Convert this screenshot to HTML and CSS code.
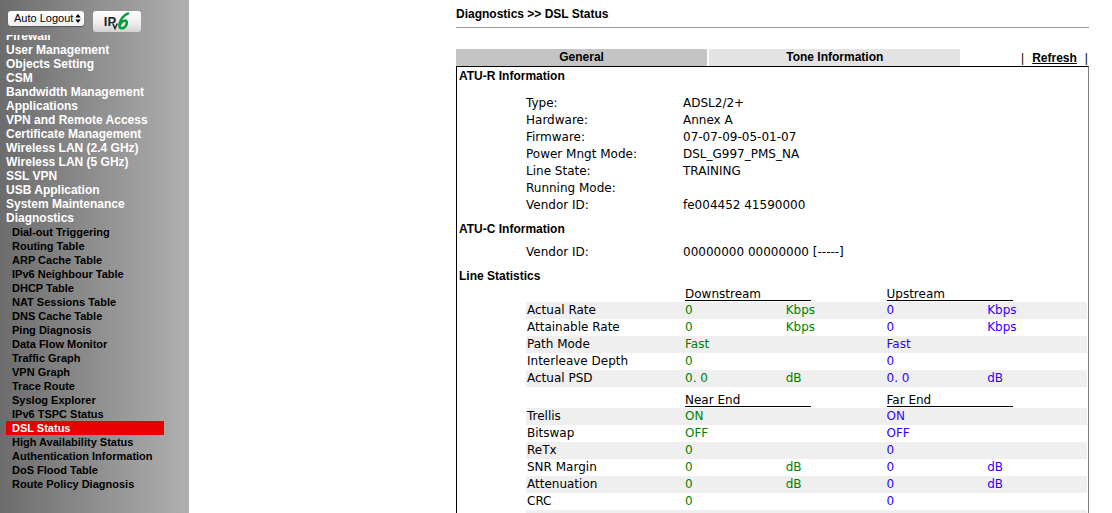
FILE: index.html
```html
<!DOCTYPE html>
<html lang="en">
<head>
<meta charset="utf-8">
<title>DSL Status</title>
<link rel="stylesheet" href="styles.css">
</head>
<body class="page">
<aside class="sidebar">
  <div class="tools">
    <div class="logout">
      <select class="logout-select" aria-label="Auto Logout"><option>Auto Logout</option></select>
      <svg class="logout-arrows" viewBox="0 0 6 10" aria-hidden="true"><path d="M3 0 6 4H0zM3 10 0 6h6z"/></svg>
    </div>
    <button class="ipv6" type="button" aria-label="IPv6">
      <span class="ipv6-ip">IP</span>
      <svg class="ipv6-six" viewBox="0 0 18 20" aria-hidden="true">
        <path class="ipv6-v" d="M1 13 3 17.500 5 13"/>
        <path d="M16 2.500C11.500 4 7.500 9.500 7.300 14c-.1 4.300 4.500 4 6.500 1 2-3.200 1-5.800-1.300-5.300C10.500 10 8.700 12 7.800 14"/>
      </svg>
    </button>
  </div>
  <nav class="menu">
    <ul class="menu-list">
      <li><a href="#">Firewall</a></li>
      <li><a href="#">User Management</a></li>
      <li><a href="#">Objects Setting</a></li>
      <li><a href="#">CSM</a></li>
      <li><a href="#">Bandwidth Management</a></li>
      <li><a href="#">Applications</a></li>
      <li><a href="#">VPN and Remote Access</a></li>
      <li><a href="#">Certificate Management</a></li>
      <li><a href="#">Wireless LAN (2.4 GHz)</a></li>
      <li><a href="#">Wireless LAN (5 GHz)</a></li>
      <li><a href="#">SSL VPN</a></li>
      <li><a href="#">USB Application</a></li>
      <li><a href="#">System Maintenance</a></li>
      <li><a href="#">Diagnostics</a>
        <ul class="submenu">
          <li><a href="#">Dial-out Triggering</a></li>
          <li><a href="#">Routing Table</a></li>
          <li><a href="#">ARP Cache Table</a></li>
          <li><a href="#">IPv6 Neighbour Table</a></li>
          <li><a href="#">DHCP Table</a></li>
          <li><a href="#">NAT Sessions Table</a></li>
          <li><a href="#">DNS Cache Table</a></li>
          <li><a href="#">Ping Diagnosis</a></li>
          <li><a href="#">Data Flow Monitor</a></li>
          <li><a href="#">Traffic Graph</a></li>
          <li><a href="#">VPN Graph</a></li>
          <li><a href="#">Trace Route</a></li>
          <li><a href="#">Syslog Explorer</a></li>
          <li><a href="#">IPv6 TSPC Status</a></li>
          <li><a class="current" href="#">DSL Status</a></li>
          <li><a href="#">High Availability Status</a></li>
          <li><a href="#">Authentication Information</a></li>
          <li><a href="#">DoS Flood Table</a></li>
          <li><a href="#">Route Policy Diagnosis</a></li>
        </ul>
      </li>
    </ul>
  </nav>
</aside>
<main class="content">
  <h1 class="title">Diagnostics &gt;&gt; DSL Status</h1>
  <div class="tabs">
    <a class="tab active" href="#">General</a>
    <a class="tab" href="#">Tone Information</a>
    <div class="refresh"><span>|</span><a href="#">Refresh</a><span>|</span></div>
  </div>
  <div class="panel">
    <h2 class="heading">ATU-R Information</h2>
    <table class="info">
      <tr><th>Type:</th><td>ADSL2/2+</td></tr>
      <tr><th>Hardware:</th><td>Annex A</td></tr>
      <tr><th>Firmware:</th><td>07-07-09-05-01-07</td></tr>
      <tr><th>Power Mngt Mode:</th><td>DSL_G997_PMS_NA</td></tr>
      <tr><th>Line State:</th><td>TRAINING</td></tr>
      <tr><th>Running Mode:</th><td></td></tr>
      <tr><th>Vendor ID:</th><td>fe004452 41590000</td></tr>
    </table>
    <h2 class="heading">ATU-C Information</h2>
    <table class="info compact">
      <tr><th>Vendor ID:</th><td>00000000 00000000 [-----]</td></tr>
    </table>
    <h2 class="heading">Line Statistics</h2>
    <table class="stats">
      <thead><tr><td class="name"></td><th colspan="2"><span class="group">Downstream</span></th><th colspan="2"><span class="group">Upstream</span></th></tr></thead>
      <tbody>
        <tr><th>Actual Rate</th><td class="down">0</td><td class="down">Kbps</td><td class="up">0</td><td class="up">Kbps</td></tr>
        <tr><th>Attainable Rate</th><td class="down">0</td><td class="down">Kbps</td><td class="up">0</td><td class="up">Kbps</td></tr>
        <tr><th>Path Mode</th><td class="down">Fast</td><td></td><td class="up">Fast</td><td></td></tr>
        <tr><th>Interleave Depth</th><td class="down">0</td><td></td><td class="up">0</td><td></td></tr>
        <tr><th>Actual PSD</th><td class="down">0. 0</td><td class="down">dB</td><td class="up">0. 0</td><td class="up">dB</td></tr>
      </tbody>
    </table>
    <table class="stats">
      <thead><tr><td class="name"></td><th colspan="2"><span class="group">Near End</span></th><th colspan="2"><span class="group">Far End</span></th></tr></thead>
      <tbody>
        <tr><th>Trellis</th><td class="down">ON</td><td></td><td class="up">ON</td><td></td></tr>
        <tr><th>Bitswap</th><td class="down">OFF</td><td></td><td class="up">OFF</td><td></td></tr>
        <tr><th>ReTx</th><td class="down">0</td><td></td><td class="up">0</td><td></td></tr>
        <tr><th>SNR Margin</th><td class="down">0</td><td class="down">dB</td><td class="up">0</td><td class="up">dB</td></tr>
        <tr><th>Attenuation</th><td class="down">0</td><td class="down">dB</td><td class="up">0</td><td class="up">dB</td></tr>
        <tr><th>CRC</th><td class="down">0</td><td></td><td class="up">0</td><td></td></tr>
        <tr><th></th><td></td><td></td><td></td><td></td></tr>
      </tbody>
    </table>
  </div>
</main>
</body>
</html>
```
FILE: styles.css
```css
* { box-sizing: border-box; }

.page {
  margin: 0;
  height: 100vh;
  overflow: hidden;
  display: flex;
  background: #fff;
  color: #000;
  font: 12px/17px "DejaVu Sans", Verdana, sans-serif;
}

/* Sidebar */
.sidebar {
  flex: 0 0 189px;
  height: 100vh;
  display: flex;
  flex-direction: column;
  background: linear-gradient(to right, #6c6c6c, #b0b0b0);
  font-family: "Liberation Sans", Arial, sans-serif;
}
.tools {
  flex: none;
  display: flex;
  align-items: flex-start;
  gap: 9px;
  height: 35px;
  padding: 11px 8px 0;
}
.logout { position: relative; }
.logout-select {
  display: block;
  appearance: none;
  width: 76px;
  height: 15px;
  padding: 0 0 0 6px;
  border: 0;
  border-radius: 3px;
  background: linear-gradient(#fff, #f0f0f0);
  box-shadow: 0 1px 1px #555;
  color: #000;
  font: 11px/15px "Liberation Sans", Arial, sans-serif;
}
.logout-arrows {
  position: absolute;
  right: 3px;
  top: 3px;
  width: 6px;
  height: 9px;
  pointer-events: none;
}
.ipv6 {
  display: flex;
  align-items: flex-start;
  justify-content: center;
  width: 48px;
  height: 21px;
  padding: 0;
  border: 0;
  border-radius: 3px;
  background: linear-gradient(#fff, #ececec 60%, #d2d2d2);
  color: #222;
  font-family: "Liberation Sans", Arial, sans-serif;
  font-weight: bold;
}
.ipv6-ip { font-size: 13px; line-height: 21px; }
.ipv6-six { width: 18px; height: 20px; margin-left: -4px; fill: none; stroke: #0a9b3c; stroke-width: 2.5; stroke-linecap: round; }
.ipv6-v { stroke: #222; stroke-width: 1.5; }

.menu { overflow: hidden; padding-left: 6px; }
.menu-list, .submenu { margin: 0; padding: 0; list-style: none; }
.menu-list { margin-top: -6px; font-weight: bold; font-size: 12px; line-height: 14px; }
.menu a { display: block; color: #fff; text-decoration: none; }
.submenu { width: 158px; font-size: 11px; }
.submenu a { padding-left: 6px; color: #000; }
.submenu .current { background: #e60000; color: #fff; }

/* Content */
.content { flex: 1; min-width: 0; padding: 6px 23px 0 267px; }
.title, .heading, .tabs { font: bold 12px/17px "Liberation Sans", Arial, sans-serif; }
.title { margin: 0 0 21px; padding-bottom: 4px; border-bottom: 1px solid #999; }
.tabs { display: grid; grid-template-columns: 2fr 2fr 1fr; }
.tab {
  border-right: 2px solid #fff;
  background: #e3e3e3;
  color: #000;
  text-align: center;
  text-decoration: none;
}
.tab.active { background: #c4c4c4; }
.refresh { display: flex; justify-content: flex-end; gap: 8px; padding: 1px 1px 0 0; line-height: 16px; }
.refresh span { font-weight: normal; }
.refresh a { color: #000; }

.panel { border: 1px solid #000; border-right-color: #808080; padding-right: 1px; }
.heading { margin: 0; padding: 1px 2px 0; }

table { border-collapse: collapse; table-layout: fixed; }
th, td { height: 17px; padding: 0; text-align: left; font-weight: normal; }
.info { margin: 10px 0 6px 69px; }
.info th { width: 157px; }
.info.compact { margin: 6px 0 6px 69px; }

.stats { width: calc(100% - 69px); margin-left: 69px; }
.stats + .stats { margin-top: 4px; }
.stats th, .stats td { padding-left: 1px; }
.stats .name { width: 158px; }
.stats tbody tr:nth-child(odd) { background: #efefef; }
.group {
  display: block;
  width: 126px;
  height: 15px;
  line-height: 16px;
  border-bottom: 1px solid #000;
}
.down { color: #008000; }
.up { color: #3300ff; }
```
